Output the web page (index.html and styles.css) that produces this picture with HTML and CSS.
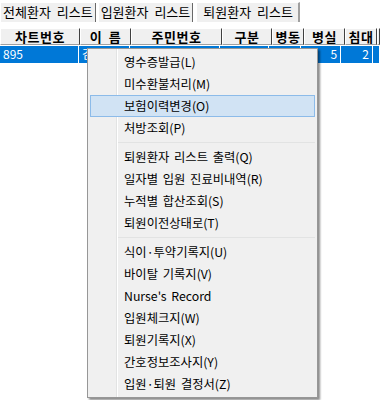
FILE: index.html
```html
<html>
<head>
  <link rel="stylesheet" href="styles.css">
</head>
<body>
  <div class="tabs">
    <div class="tab">전체환자 리스트</div>
    <div class="tab">입원환자 리스트</div>
    <div class="tab active">퇴원환자 리스트</div>
  </div>

  <div class="grid">
    <div class="row head">
      <div class="cell c1">차트번호</div>
      <div class="cell c2">이 름</div>
      <div class="cell c3">주민번호</div>
      <div class="cell c4">구분</div>
      <div class="cell c5">병동</div>
      <div class="cell c6">병실</div>
      <div class="cell c7">침대</div>
      <div class="cell c8"></div>
    </div>
    <div class="row sel">
      <div class="cell c1">895</div>
      <div class="cell c2">김</div>
      <div class="cell c3"></div>
      <div class="cell c4"></div>
      <div class="cell c5"></div>
      <div class="cell c6 num">5</div>
      <div class="cell c7 num">2</div>
      <div class="cell c8"></div>
    </div>
  </div>

  <ul class="menu">
    <li>영수증발급(L)</li>
    <li>미수환불처리(M)</li>
    <li class="hover">보험이력변경(O)</li>
    <li>처방조회(P)</li>
    <li class="sep"></li>
    <li>퇴원환자 리스트 출력(Q)</li>
    <li>일자별 입원 진료비내역(R)</li>
    <li>누적별 합산조회(S)</li>
    <li>퇴원이전상태로(T)</li>
    <li class="sep"></li>
    <li>식이·투약기록지(U)</li>
    <li>바이탈 기록지(V)</li>
    <li>Nurse's Record</li>
    <li>입원체크지(W)</li>
    <li>퇴원기록지(X)</li>
    <li>간호정보조사지(Y)</li>
    <li>입원·퇴원 결정서(Z)</li>
  </ul>
</body>
</html>
```

FILE: styles.css
```css
body {
  margin: 0;
  background-color: #ffffff;
  font-family: "Noto Sans CJK KR", "Noto Sans", sans-serif;
  font-size: 13px;
  word-spacing: 3px;
  color: #000000;
}

.tabs {
  display: flex;
  height: 22px;
  align-items: flex-end;
  padding-top: 2px;
  box-sizing: border-box;
}

.tab {
  height: 19px;
  line-height: 18px;
  padding: 0 2px;
  margin-right: 2px;
  background-color: #f0f0f0;
  border-left: 1px solid #ffffff;
  border-right: 1px solid #696969;
  box-sizing: border-box;
}

.tab.active {
  height: 20px;
  padding: 0 5px 0 6px;
  margin-left: 1px;
  border-top: 1px solid #ffffff;
  border-right: 2px solid #a0a0a0;
}

.grid {
  margin-top: 6px;
}

.row {
  display: flex;
  height: 17px;
}

.head {
  background-color: #f0f0f0;
}

.head .cell {
  font-weight: bold;
  text-align: center;
  line-height: 15px;
  letter-spacing: 0.5px;
  border-top: 1px solid #ffffff;
  border-left: 1px solid #ffffff;
  border-right: 1px solid #404040;
  border-bottom: 1px solid #a0a0a0;
}

.sel {
  margin-top: 1px;
  background-color: #0078d7;
  color: #ffffff;
  font-size: 12px;
}

.sel .cell {
  line-height: 16px;
  padding: 0 3px;
  border-right: 1px solid #ffffff;
}

.cell {
  box-sizing: border-box;
  overflow: hidden;
  white-space: nowrap;
}

.num {
  text-align: right;
}

.c1 { width: 80px; }
.c2 { width: 51px; }
.c3 { width: 91px; }
.c4 { width: 50px; }
.c5 { width: 32px; }
.c6 { width: 41px; }
.c7 { width: 32px; }
.c8 { flex: 1; }

.menu {
  position: absolute;
  left: 87px;
  top: 48px;
  width: 231px;
  margin: 0;
  padding: 2px;
  list-style: none;
  background-color: #f0f0f0;
  border: 1px solid #979797;
  box-shadow: 2px 2px 2px rgba(0, 0, 0, 0.45);
  background-image: linear-gradient(#e2e3e3, #e2e3e3), linear-gradient(#ffffff, #ffffff);
  background-size: 1px 100%, 1px 100%;
  background-position: 28px 0, 29px 0;
  background-repeat: no-repeat;
  box-sizing: border-box;
}

.menu li {
  height: 22px;
  line-height: 21px;
  padding-left: 33px;
  font-size: 12.3px;
  word-spacing: 2px;
  color: #000000;
  border: 1px solid transparent;
  box-sizing: border-box;
}

.menu li.hover {
  background-color: #d1e3f4;
  border-color: #8cbbe9;
}

.menu li.sep {
  height: 7px;
  margin-left: 28px;
  padding: 0;
  border: none;
  background: linear-gradient(#e2e3e3, #e2e3e3) 0 3px / 100% 1px no-repeat;
}
```
